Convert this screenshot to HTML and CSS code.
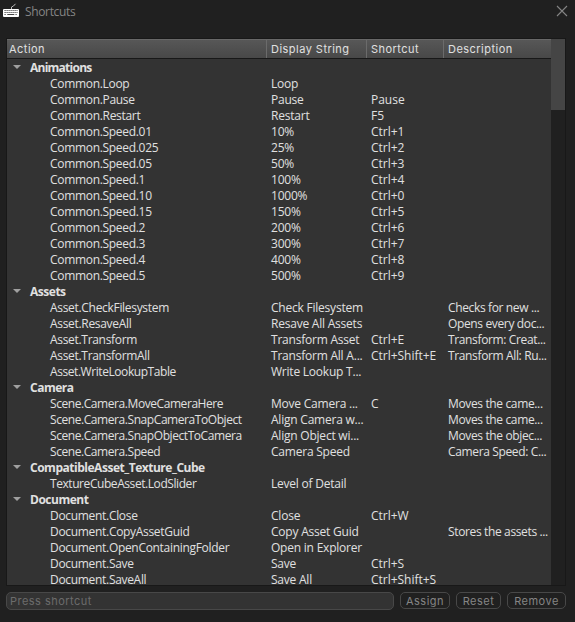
FILE: index.html
```html
<!DOCTYPE html>
<html lang="en">
<head>
<meta charset="utf-8">
<title>Shortcuts</title>
<link rel="stylesheet" href="styles.css">
</head>
<body>
<div class="window">
<header class="titlebar">
<svg class="keyboard" width="16" height="14" viewBox="0 0 16 14"><path d="M8.5 6V4L10.5 3L12.5 .8" fill="none" stroke="#bbb"/><rect y="6" width="16" height="8" rx="1" fill="#fff"/><path d="M1.5 7.5h13M1.5 9.5h13M1.5 11.5h2M12.5 11.5h2" stroke="#444" stroke-dasharray="1.2 .8"/><path d="M4.3 11.5h7" stroke="#444"/></svg>
<span class="title">Shortcuts</span>
<svg class="close" width="12" height="12" viewBox="0 0 12 12"><path d="M1 1L11 11M11 1L1 11" stroke="#858585" stroke-width="1.1"/></svg>
</header>
<main class="panel">
<div class="table">
<div class="head"><span>Action</span><span>Display String</span><span>Shortcut</span><span>Description</span></div>
<div class="rows">
<div class="group tight"><i></i><b>Animations</b></div>
<div class="row"><span>Common.Loop</span><span>Loop</span></div>
<div class="row"><span>Common.Pause</span><span>Pause</span><span>Pause</span></div>
<div class="row"><span>Common.Restart</span><span>Restart</span><span>F5</span></div>
<div class="row"><span>Common.Speed.01</span><span>10%</span><span>Ctrl+1</span></div>
<div class="row"><span>Common.Speed.025</span><span>25%</span><span>Ctrl+2</span></div>
<div class="row"><span>Common.Speed.05</span><span>50%</span><span>Ctrl+3</span></div>
<div class="row"><span>Common.Speed.1</span><span>100%</span><span>Ctrl+4</span></div>
<div class="row"><span>Common.Speed.10</span><span>1000%</span><span>Ctrl+0</span></div>
<div class="row"><span>Common.Speed.15</span><span>150%</span><span>Ctrl+5</span></div>
<div class="row"><span>Common.Speed.2</span><span>200%</span><span>Ctrl+6</span></div>
<div class="row"><span>Common.Speed.3</span><span>300%</span><span>Ctrl+7</span></div>
<div class="row"><span>Common.Speed.4</span><span>400%</span><span>Ctrl+8</span></div>
<div class="row"><span>Common.Speed.5</span><span>500%</span><span>Ctrl+9</span></div>
<div class="group"><i></i><b>Assets</b></div>
<div class="row"><span>Asset.CheckFilesystem</span><span>Check Filesystem</span><span></span><span>Checks for new ...</span></div>
<div class="row"><span>Asset.ResaveAll</span><span>Resave All Assets</span><span></span><span>Opens every doc...</span></div>
<div class="row"><span>Asset.Transform</span><span>Transform Asset</span><span>Ctrl+E</span><span>Transform: Creat...</span></div>
<div class="row"><span>Asset.TransformAll</span><span>Transform All A...</span><span>Ctrl+Shift+E</span><span>Transform All: Ru...</span></div>
<div class="row scene"><span>Asset.WriteLookupTable</span><span>Write Lookup T...</span></div>
<div class="group"><i></i><b>Camera</b></div>
<div class="row scene"><span>Scene.Camera.MoveCameraHere</span><span>Move Camera ...</span><span>C</span><span>Moves the came...</span></div>
<div class="row scene"><span>Scene.Camera.SnapCameraToObject</span><span>Align Camera w...</span><span></span><span>Moves the came...</span></div>
<div class="row scene"><span>Scene.Camera.SnapObjectToCamera</span><span>Align Object wi...</span><span></span><span>Moves the objec...</span></div>
<div class="row scene"><span>Scene.Camera.Speed</span><span>Camera Speed</span><span></span><span>Camera Speed: C...</span></div>
<div class="group"><i></i><b>CompatibleAsset_Texture_Cube</b></div>
<div class="row scene"><span>TextureCubeAsset.LodSlider</span><span>Level of Detail</span></div>
<div class="group"><i></i><b>Document</b></div>
<div class="row"><span>Document.Close</span><span>Close</span><span>Ctrl+W</span></div>
<div class="row"><span>Document.CopyAssetGuid</span><span>Copy Asset Guid</span><span></span><span>Stores the assets ...</span></div>
<div class="row"><span>Document.OpenContainingFolder</span><span>Open in Explorer</span></div>
<div class="row"><span>Document.Save</span><span>Save</span><span>Ctrl+S</span></div>
<div class="row"><span>Document.SaveAll</span><span>Save All</span><span>Ctrl+Shift+S</span></div>
</div>
</div>
<div class="scroll"><div class="thumb"></div></div>
</main>
<footer class="footer">
<div class="field">Press shortcut</div>
<div class="btn assign">Assign</div>
<div class="btn reset">Reset</div>
<div class="btn remove">Remove</div>
</footer>
</div>
</body>
</html>
```
FILE: styles.css
```css
* { box-sizing: border-box; }
body { margin: 0; background: #202020; font-family: "Open Sans", sans-serif; font-size: 12px; color: #e0e0e0; }
.window { width: 575px; height: 622px; overflow: hidden; background: #202020; }
.titlebar { display: flex; align-items: flex-start; height: 38px; padding: 3px 7px 0 3px; }
.keyboard { flex: none; }
.title { margin-left: 6px; line-height: 18px; color: #858585; letter-spacing: -.35px; }
.close { margin: 2px 0 0 auto; }
.panel { display: flex; width: 560px; height: 548px; margin-left: 6px; border: 1px solid #181818; background: #333; }
.table { width: 544px; height: 546px; overflow: hidden; }
.head { display: grid; grid-template-columns: 260px 100px 77px 107px; height: 20px; border-top: 1px solid #686868; border-bottom: 1px solid #181818; background: linear-gradient(#575757, #484848); font-family: Inter, sans-serif; font-size: 11px; line-height: 18px; letter-spacing: .47px; }
.head span { padding-left: 4px; border-right: 1px solid #6b6b6b; white-space: nowrap; }
.head span:first-child { padding-left: 2px; }
.head span:last-child { border: 0; }
.rows { padding-top: 1px; }
.row, .group { height: 16px; line-height: 16px; white-space: pre; }
.row { display: grid; grid-template-columns: 264px 100px 77px 103px; letter-spacing: -.22px; }
.row span:first-child { padding-left: 43px; letter-spacing: -.31px; }
.row span:nth-child(3) { letter-spacing: -.02px; }
.row span:nth-child(4) { letter-spacing: -.36px; }
.row.scene span:first-child { letter-spacing: -.43px; }
.group { display: flex; align-items: flex-start; }
.group i { width: 8px; height: 4px; margin: 5px 9px 0 6px; background: #a0a0a0; clip-path: polygon(0 0, 100% 0, 50% 100%); }
.group b { font-weight: 700; letter-spacing: -.48px; }
.group.tight b { letter-spacing: -.75px; }
.scroll { flex: 1; background: #202020; }
.thumb { height: 71px; background: #454545; }
.footer { display: flex; align-items: flex-start; padding: 6px 0 0 6px; font-family: Inter, sans-serif; font-size: 11px; }
.field { width: 388px; height: 18px; padding-left: 3px; border: 1px solid #484848; border-radius: 5px; background: #333; color: #6c6c6c; line-height: 16px; letter-spacing: .47px; }
.btn { height: 17px; border: 1px solid #484848; border-radius: 5px; color: #858585; text-align: center; line-height: 16px; letter-spacing: .5px; }
.assign { width: 50px; margin-left: 6px; }
.reset { width: 45px; margin-left: 6px; }
.remove { width: 59px; margin-left: 6px; }
```
